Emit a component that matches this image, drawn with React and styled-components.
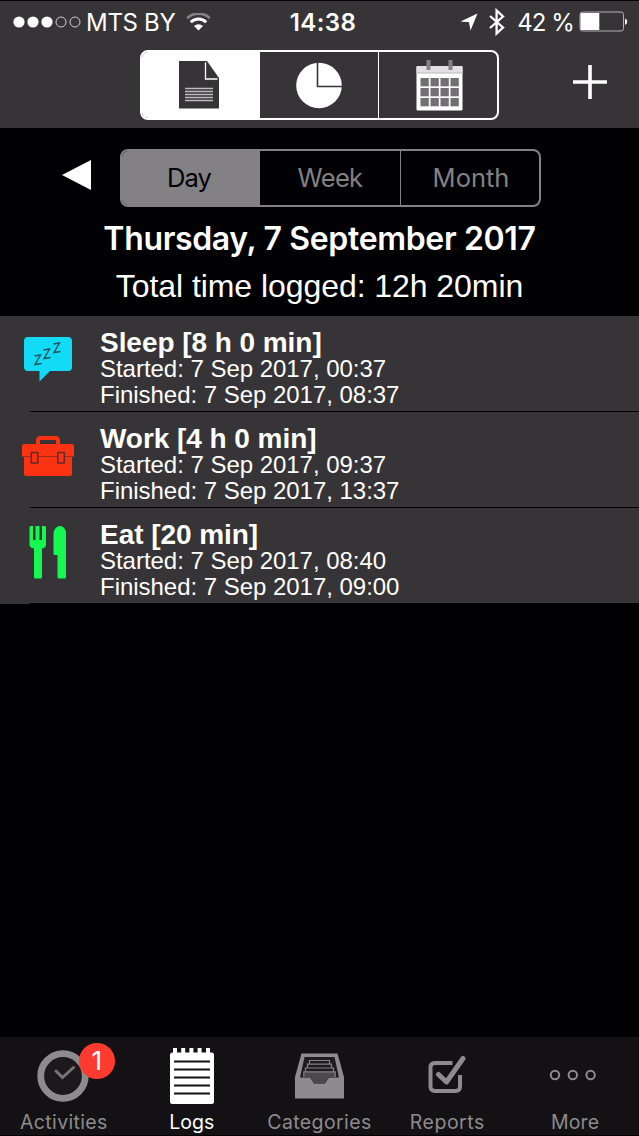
import { useState } from "react";
import styled, { createGlobalStyle, ThemeProvider } from "styled-components";

const theme = {
  colors: {
    black: "#010002",
    panel: "#363436",
    tabBar: "#131113",
    white: "#ffffff",
    gray: "#838183",
    tabGray: "#8d8b8e",
    red: "#ff3b30",
  },
  fonts: {
    system: `Inter, "Liberation Sans", sans-serif`,
    list: `"Liberation Sans", Arial, sans-serif`,
  },
};

const logs = [
  {
    name: "Sleep",
    duration: "8 h 0 min",
    started: "7 Sep 2017, 00:37",
    finished: "7 Sep 2017, 08:37",
    icon: SleepIcon,
  },
  {
    name: "Work",
    duration: "4 h 0 min",
    started: "7 Sep 2017, 09:37",
    finished: "7 Sep 2017, 13:37",
    icon: WorkIcon,
  },
  {
    name: "Eat",
    duration: "20 min",
    started: "7 Sep 2017, 08:40",
    finished: "7 Sep 2017, 09:00",
    icon: EatIcon,
  },
];

const views = [
  { id: "list", icon: DocumentIcon },
  { id: "chart", icon: PieIcon },
  { id: "calendar", icon: CalendarIcon },
];

const periods = [
  { name: "Day", spacing: -0.9 },
  { name: "Week", spacing: -0.7 },
  { name: "Month", spacing: 0 },
];

const tabs = [
  { label: "Activities", icon: ClockIcon, badge: 1, spacing: 0.35 },
  { label: "Logs", icon: NotepadIcon, spacing: 0 },
  { label: "Categories", icon: TrayIcon, spacing: 0.4 },
  { label: "Reports", icon: CheckIcon, spacing: 0.5 },
  { label: "More", icon: MoreIcon, spacing: 0.1 },
];

function App() {
  const [view, setView] = useState("list");
  const [period, setPeriod] = useState("Day");
  const [tab, setTab] = useState("Logs");

  return (
    <ThemeProvider theme={theme}>
      <GlobalStyle />
      <Screen>
        <Header>
          <StatusBar />
          <Toolbar>
            <ViewSwitch>
              {views.map(({ id, icon: Icon }) => (
                <ViewButton key={id} $active={id === view} onClick={() => setView(id)}>
                  <Icon />
                </ViewButton>
              ))}
            </ViewSwitch>
            <AddButton>
              <svg width="36" height="36" viewBox="0 0 36 36">
                <path d="M18 1v34M1 18h34" stroke="#fff" strokeWidth="3.6" />
              </svg>
            </AddButton>
          </Toolbar>
        </Header>

        <Summary>
          <PeriodRow>
            <PrevButton>
              <svg width="30" height="32" viewBox="0 0 30 32">
                <path d="M0 16L29 1V31Z" fill="#fff" />
              </svg>
            </PrevButton>
            <PeriodSwitch>
              {periods.map(({ name, spacing }) => (
                <PeriodButton
                  key={name}
                  $active={name === period}
                  $spacing={spacing}
                  onClick={() => setPeriod(name)}
                >
                  {name}
                </PeriodButton>
              ))}
            </PeriodSwitch>
          </PeriodRow>
          <DateTitle>Thursday, 7 September 2017</DateTitle>
          <TotalTime>Total time logged: 12h 20min</TotalTime>
        </Summary>

        <LogList>
          {logs.map(({ icon: Icon, ...log }) => (
            <LogRow key={log.name}>
              <LogIcon>
                <Icon />
              </LogIcon>
              <LogBody>
                <LogTitle>
                  {log.name} [{log.duration}]
                </LogTitle>
                <LogTime>Started: {log.started}</LogTime>
                <LogTime>Finished: {log.finished}</LogTime>
              </LogBody>
            </LogRow>
          ))}
        </LogList>

        <TabBar>
          {tabs.map(({ label, icon: Icon, badge, spacing }) => (
            <Tab key={label} $active={label === tab} onClick={() => setTab(label)}>
              <TabIcon>
                <Icon />
                {badge && <Badge>{badge}</Badge>}
              </TabIcon>
              <TabLabel $spacing={spacing}>{label}</TabLabel>
            </Tab>
          ))}
        </TabBar>
      </Screen>
    </ThemeProvider>
  );
}
export default App;

function StatusBar() {
  return (
    <StatusRow>
      <StatusLeft>
        <svg width="68" height="14" viewBox="0 0 68 14">
          <circle cx="6" cy="7" r="5.6" fill="#fff" />
          <circle cx="20" cy="7" r="5.6" fill="#fff" />
          <circle cx="34" cy="7" r="5.6" fill="#fff" />
          <circle cx="48" cy="7" r="5" fill="none" stroke="#d0ced0" />
          <circle cx="62" cy="7" r="5" fill="none" stroke="#d0ced0" />
        </svg>
        <Carrier>MTS BY</Carrier>
        <svg width="25" height="18" viewBox="0 0 25 18">
          <path d="M1.2 5.2A16.4 16.4 0 0 1 23.8 5.2" fill="none" stroke="#838183" strokeWidth="2.8" />
          <path d="M4.8 9.2A11 11 0 0 1 20.2 9.2" fill="none" stroke="#fff" strokeWidth="3" />
          <path d="M12.5 17.6L8 13.1A6.2 6.2 0 0 1 17 13.1Z" fill="#fff" />
        </svg>
      </StatusLeft>
      <Clock>14:38</Clock>
      <StatusRight>
        <svg width="18" height="18" viewBox="0 0 18 18">
          <path d="M17.5 .5L10.5 17.5L9 9.2L.5 8.6Z" fill="#fff" />
        </svg>
        <svg width="18" height="28" viewBox="0 0 18 28">
          <path
            d="M2 8L15 19.5L8.6 25.5V2.5L15 8.5L2 20"
            fill="none"
            stroke="#fff"
            strokeWidth="2.3"
          />
        </svg>
        <Percent>42 %</Percent>
        <svg width="50" height="22" viewBox="0 0 50 22">
          <rect x="1" y="1" width="43.5" height="19" rx="2.5" fill="none" stroke="#b5b3b5" />
          <path d="M2.5 2H20.3V19H2.5A1.5 1.5 0 0 1 1.5 18V3A1.5 1.5 0 0 1 2.5 2Z" fill="#fff" />
          <path d="M46 7.5A3.5 3.5 0 0 1 46 14Z" fill="#fff" />
        </svg>
      </StatusRight>
    </StatusRow>
  );
}

function DocumentIcon() {
  return (
    <svg width="40" height="48" viewBox="0 0 40 48">
      <path d="M0 0H28L40 17V47.5H0Z" fill="#363436" />
      <path d="M26.5 1.5V18H38.5" fill="none" stroke="#fff" strokeWidth="1.3" />
      <path d="M6 27.5H34M6 30.5H34M6 33.5H34M6 36.5H34M6 39.5H34" stroke="#bdbbbd" strokeWidth="1.3" />
    </svg>
  );
}

function PieIcon() {
  return (
    <svg width="46" height="47" viewBox="0 0 46 47">
      <circle cx="23" cy="23.5" r="22.8" fill="#fff" />
      <path d="M21.5 0V24.5H46" fill="none" stroke="#363436" strokeWidth="1.6" />
    </svg>
  );
}

function CalendarIcon() {
  const columns = [4.5, 14.5, 24.5, 34.5];
  const rows = [18, 28, 38];

  return (
    <svg width="47" height="51" viewBox="0 0 47 51">
      <rect x="0.5" y="6" width="46" height="44.5" rx="1" fill="#fff" />
      <path d="M.5 7.5Q.5 6 2 6H45Q46.5 6 46.5 7.5V13H.5Z" fill="#e2e0e2" />
      <path d="M.5 13H46.5" stroke="#b9b7b9" />
      <rect x="10.5" y="0" width="4" height="10" fill="#838183" />
      <rect x="32.5" y="0" width="4" height="10" fill="#838183" />
      {rows.map((y) =>
        columns.map((x) => <rect key={`${x}-${y}`} x={x} y={y} width="8.3" height="8.3" fill="#727072" />)
      )}
    </svg>
  );
}

function SleepIcon() {
  return (
    <svg width="48" height="46" viewBox="0 0 48 46">
      <path
        d="M4 0H44Q48 0 48 4V30Q48 34 44 34H26L15.5 44.5V34H4Q0 34 0 30V4Q0 0 4 0Z"
        fill="#12dbf8"
      />
      <path
        d="M10.5 19L16.5 18L11 27.5L17.500 26.500M19.500 13L25.500 12L20 21.500L26.500 20.500M29.500 7L35.500 6L30 15.500L36.500 14.500"
        fill="none"
        stroke="#26515b"
        strokeWidth="1.4"
      />
    </svg>
  );
}

function WorkIcon() {
  return (
    <svg width="52" height="40" viewBox="0 0 52 40">
      <path d="M16 9V5Q16 2 19 2H33Q36 2 36 5V9" fill="none" stroke="#fb3313" strokeWidth="4" />
      <path
        d="M2.5 8H49.5Q52 8 52 10.5V20H50V37.5Q50 40 47.5 40H4.5Q2 40 2 37.5V20H0V10.5Q0 8 2.5 8Z"
        fill="#fb3313"
      />
      <path d="M0 20.5H9M16.5 20.5H35M43 20.5H52" stroke="#962b1e" strokeWidth="1.2" />
      <rect x="9.3" y="16.5" width="6.5" height="10.5" fill="none" stroke="#5e2b28" strokeWidth="1.5" />
      <rect x="35.8" y="16.5" width="6.5" height="10.5" fill="none" stroke="#5e2b28" strokeWidth="1.5" />
    </svg>
  );
}

function EatIcon() {
  return (
    <svg width="38" height="53" viewBox="0 0 38 53">
      <path
        d="M1.5 0H4V14H6.5V0H10.5V14H13V0H15.5Q17 0 17 1.5V18.5Q17 22 13 22.5V51Q13 52.5 11.5 52.5H6.5Q5 52.5 5 51V22.5Q.5 22 .5 18.5V1.5Q.5 0 1.5 0Z"
        fill="#15f84f"
      />
      <path
        d="M24.5 8C24.5 3 28 0 31 0C34 0 37 3 37 6.5V51Q37 52.5 35.5 52.5H30Q28.5 52.5 28.5 51V29H26Q24.5 29 24.5 27.5Z"
        fill="#15f84f"
      />
    </svg>
  );
}

function ClockIcon() {
  return (
    <svg width="54" height="52" viewBox="0 0 54 52">
      <circle cx="26" cy="26" r="22.3" fill="#1b191b" stroke="currentColor" strokeWidth="6.8" />
      <path
        d="M19 21L25.5 27.5L36.5 17.5"
        fill="none"
        stroke="#767476"
        strokeWidth="3"
        strokeLinecap="round"
      />
    </svg>
  );
}

function NotepadIcon() {
  return (
    <svg width="44" height="56" viewBox="0 0 44 56">
      <rect y="4.5" width="44" height="51.5" rx="2.5" fill="currentColor" />
      <path d="M5 0V6M13.2 0V6M21.4 0V6M29.6 0V6M38 0V6" stroke="currentColor" strokeWidth="4" />
      <path
        d="M4 13.5H40M4 21.5H40M4 29.5H40M4 37.5H40M4 45.5H40"
        stroke="#131113"
        strokeWidth="2"
      />
    </svg>
  );
}

function TrayIcon() {
  return (
    <svg width="49" height="46" viewBox="0 0 49 46">
      <path d="M6.5 .5H42.5L49 24V45.5H0V24Z" fill="currentColor" />
      <path d="M9.5 4H39.5L44 24.5H34L30 30.5H19L15 24.5H5Z" fill="#1d1b1d" />
      <path d="M9 19H40V24.5H34L30 30.5H19L15 24.5H9Z" fill="#4b494b" />
      <path
        d="M14.5 10.5V7.5H34.5V10.5M12.5 14.5V11.2H36.5V14.5M10.5 18.5V15H38.5V18.5M8.8 24V18.8H40.2V24"
        fill="none"
        stroke="#858385"
        strokeWidth="1.2"
      />
    </svg>
  );
}

function CheckIcon() {
  return (
    <svg width="38" height="41" viewBox="0 0 38 41">
      <path
        d="M24.5 8H7Q2.5 8 2.5 12.5V31.5Q2.5 36 7 36H27.5Q32 36 32 31.5V20"
        fill="none"
        stroke="currentColor"
        strokeWidth="4"
      />
      <path
        d="M10.5 19.5L18.5 27L35 3.5"
        fill="none"
        stroke="currentColor"
        strokeWidth="5"
        strokeLinecap="round"
        strokeLinejoin="round"
      />
    </svg>
  );
}

function MoreIcon() {
  return (
    <svg width="52" height="14" viewBox="0 0 52 14">
      <g fill="none" stroke="currentColor" strokeWidth="2">
        <circle cx="6" cy="6" r="4.2" />
        <circle cx="23.8" cy="6" r="4.2" />
        <circle cx="41.6" cy="6" r="4.2" />
      </g>
    </svg>
  );
}

const GlobalStyle = createGlobalStyle`
  * {
    box-sizing: border-box;
  }
  body {
    margin: 0;
    background: #010002;
  }
  button {
    padding: 0;
    border: none;
    background: none;
    font: inherit;
    color: inherit;
  }
  svg {
    display: block;
    flex-shrink: 0;
  }
`;

const Screen = styled.div`
  display: flex;
  flex-direction: column;
  width: 639px;
  height: 1136px;
  overflow: hidden;
  color: ${({ theme }) => theme.colors.white};
  background: ${({ theme }) => theme.colors.black};
  font-family: ${({ theme }) => theme.fonts.system};
`;

const Header = styled.header`
  height: 128px;
  border-top: 1px solid ${({ theme }) => theme.colors.black};
  background: ${({ theme }) => theme.colors.panel};
`;

const StatusRow = styled.div`
  display: grid;
  grid-template-columns: 1fr auto 1fr;
  align-items: center;
  height: 41px;
  padding: 0 10px 0 13px;
`;

const StatusLeft = styled.div`
  display: flex;
  align-items: center;
`;

const StatusRight = styled.div`
  display: flex;
  align-items: center;
  justify-content: flex-end;
  & > svg:first-child {
    margin-right: 10px;
  }
`;

const Carrier = styled.span`
  margin: 2px 10px 0 5px;
  font-size: 24px;
  line-height: 30px;
  letter-spacing: -0.3px;
`;

const Clock = styled.span`
  margin: 2px 0 0 4px;
  font-size: 24px;
  font-weight: 600;
  line-height: 30px;
  letter-spacing: 0.4px;
`;

const Percent = styled.span`
  margin: 2px 5px 0 11px;
  font-size: 24px;
  line-height: 30px;
  letter-spacing: -0.9px;
`;

const Toolbar = styled.div`
  display: flex;
  align-items: flex-start;
  padding: 8px 31px 0 140px;
`;

const ViewSwitch = styled.div`
  display: grid;
  grid-template-columns: 117px 119px 119px;
  width: 359px;
  height: 70px;
  border: 2px solid ${({ theme }) => theme.colors.white};
  border-radius: 8px;
  overflow: hidden;
`;

const ViewButton = styled.button`
  display: flex;
  align-items: center;
  justify-content: center;
  background: ${({ theme, $active }) => ($active ? theme.colors.white : "transparent")};
  &:first-child {
    padding-right: 3px;
  }
  & + & {
    border-left: 1px solid ${({ theme }) => theme.colors.white};
  }
  &:last-child {
    padding-left: 3px;
  }
`;

const AddButton = styled.button`
  margin: 14px 0 0 auto;
`;

const Summary = styled.section`
  display: flex;
  flex-direction: column;
  align-items: center;
  height: 188px;
  padding-top: 21px;
`;

const PeriodRow = styled.div`
  display: flex;
  align-items: center;
  width: 100%;
  padding-left: 62px;
`;

const PrevButton = styled.button`
  margin: -6px 28px 0 0;
`;

const PeriodSwitch = styled.div`
  display: grid;
  grid-template-columns: 137px 141px 139px;
  width: 421px;
  height: 58px;
  border: 2px solid ${({ theme }) => theme.colors.gray};
  border-radius: 8px;
  overflow: hidden;
`;

const PeriodButton = styled.button`
  padding-bottom: 2px;
  font-size: 25.5px;
  letter-spacing: ${({ $spacing }) => $spacing}px;
  color: ${({ theme, $active }) => ($active ? theme.colors.black : theme.colors.gray)};
  background: ${({ theme, $active }) => ($active ? theme.colors.gray : "transparent")};
  &:first-child {
    padding-right: 3px;
  }
  & + & {
    border-left: 1.5px solid ${({ theme }) => theme.colors.gray};
  }
  &:last-child {
    padding-left: 2px;
  }
`;

const DateTitle = styled.h1`
  margin: 12px 0 0;
  font-size: 32px;
  font-weight: 600;
  line-height: 40px;
  letter-spacing: -0.34px;
`;

const TotalTime = styled.p`
  margin: 7px 0 0;
  font-family: ${({ theme }) => theme.fonts.list};
  font-size: 32px;
  line-height: 40px;
  letter-spacing: -0.06px;
`;

const LogList = styled.ul`
  margin: 0;
  padding: 0;
  list-style: none;
  flex: 1;
  font-family: ${({ theme }) => theme.fonts.list};
`;

const LogRow = styled.li`
  display: flex;
  height: 96px;
  background:
    linear-gradient(${({ theme }) => theme.colors.black}, ${({ theme }) => theme.colors.black}) 30px 100% / 100% 1px
      no-repeat,
    ${({ theme }) => theme.colors.panel};
`;

const LogIcon = styled.div`
  display: flex;
  align-items: center;
  justify-content: center;
  width: 96px;
  height: 88px;
`;

const LogBody = styled.div`
  padding: 13px 0 0 4px;
`;

const LogTitle = styled.div`
  font-size: 28px;
  font-weight: 700;
  line-height: 27px;
  letter-spacing: -0.05px;
`;

const LogTime = styled.div`
  font-size: 24px;
  line-height: 26px;
  letter-spacing: -0.03px;
`;

const TabBar = styled.nav`
  display: flex;
  height: 99px;
  border-bottom: 1px solid ${({ theme }) => theme.colors.black};
  background: ${({ theme }) => theme.colors.tabBar};
`;

const Tab = styled.button`
  display: flex;
  flex: 1 1 0;
  flex-direction: column;
  align-items: center;
  color: ${({ theme, $active }) => ($active ? theme.colors.white : theme.colors.tabGray)};
`;

const TabIcon = styled.div`
  position: relative;
  display: flex;
  align-items: center;
  justify-content: center;
  height: 77px;
`;

const Badge = styled.span`
  position: absolute;
  top: 6px;
  left: 42px;
  width: 36px;
  height: 36px;
  border-radius: 50%;
  font-size: 26px;
  line-height: 36px;
  text-align: center;
  color: ${({ theme }) => theme.colors.white};
  background: ${({ theme }) => theme.colors.red};
`;

const TabLabel = styled.span`
  margin-top: -4px;
  font-size: 19.5px;
  line-height: 24px;
  letter-spacing: ${({ $spacing }) => $spacing}px;
`;
